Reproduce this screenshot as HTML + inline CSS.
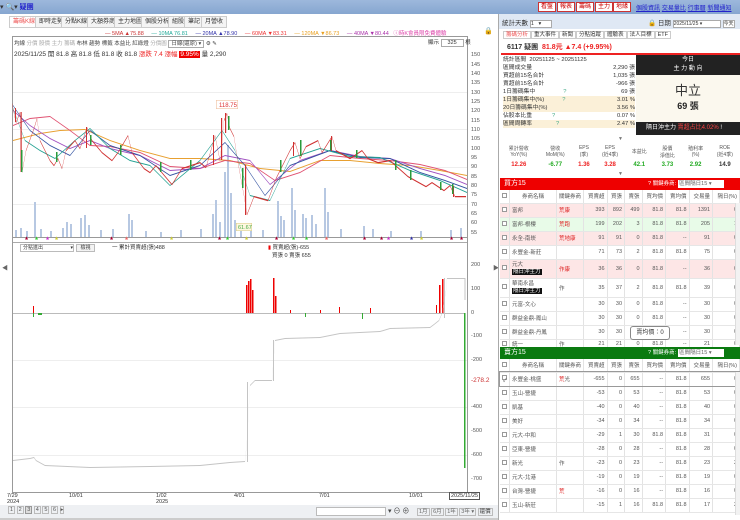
<!DOCTYPE html>
<html><head><meta charset="utf-8"><style>
*{margin:0;padding:0;box-sizing:border-box}
body{width:740px;height:520px;overflow:hidden;background:#fff;font-family:"Liberation Sans","Noto Sans CJK TC",sans-serif;font-size:6.5px;color:#333;position:relative}
.a{position:absolute;white-space:nowrap}
.tb{position:absolute;top:0;left:0;width:740px;height:14px;background:linear-gradient(#9db8dc,#86a6d0)}
.rb{position:absolute;top:2px;height:10px;border:1px solid #c33;background:#fff;color:#c00;font-size:6px;line-height:8px;padding:0 2px}
.lk{color:#22c;text-decoration:underline;font-size:6px}
.tab{position:absolute;top:16px;height:12px;border:1px solid #ccc;background:#f4f4f4;font-size:6px;line-height:10px;padding:0 3px;color:#333}
.ax{position:absolute;left:471px;font-size:5.5px;color:#555}
.tbl{position:absolute;left:500px;width:240px;border-collapse:collapse;font-size:5.5px}
.tbl td{border-right:1px solid #e3e3e3;border-bottom:1px solid #e6e6e6;text-align:right;padding:0 2px;color:#555}
.tbl td:nth-child(1){text-align:center;width:9px}
.tbl td:nth-child(2){text-align:left;width:47px}
.tbl td:nth-child(3){text-align:left;width:27px;color:#d22}
.cb{display:inline-block;width:5px;height:5px;border:1px solid #999;background:#fff}
.pink{background:#fde6e6}.mint{background:#e8fbe8}
.blk{background:#111;color:#fff;padding:0 1px}
.hl{position:absolute;height:1px;background:#eee}
</style></head><body>
<div class="tb"></div>
<div class="a" style="left:0;top:2px;font-size:7px">▾ 🔍▾ <span style="color:#22c;font-weight:bold">疑團</span></div>
<div class="rb" style="left:538px">看盤</div><div class="rb" style="left:557px">報表</div><div class="rb" style="left:576px">籌碼</div><div class="rb" style="left:595px">主力</div><div class="rb" style="left:613px">地緣</div>
<div class="a" style="left:636px;top:3px"><span class="lk">個股資訊</span> <span class="lk">交易量比</span> <span class="lk">行事曆</span> <span class="lk">新聞通知</span></div>

<div class="tab" style="left:9px;color:#e55;background:#fff">籌碼K線</div>
<div class="tab" style="left:35px">即時走勢</div>
<div class="tab" style="left:61px">分點K線</div>
<div class="tab" style="left:87px">大額券商</div>
<div class="tab" style="left:114px">主力地圖</div>
<div class="tab" style="left:141px">個股分析</div>
<div class="tab" style="left:168px">組股</div>
<div class="tab" style="left:184px">筆記</div>
<div class="tab" style="left:201px">月營收</div>
<div class="a" style="left:105px;top:29px;font-size:5.5px"><span style="color:#c33">— 5MA ▲75.88</span> &nbsp;&nbsp;&nbsp; <span style="color:#2a9">— 10MA 76.81</span> &nbsp;&nbsp;&nbsp; <span style="color:#33a">— 20MA ▲78.90</span> &nbsp;&nbsp;&nbsp; <span style="color:#e33">— 60MA ▼83.31</span> &nbsp;&nbsp;&nbsp; <span style="color:#e9a020">— 120MA ▼86.73</span> &nbsp;&nbsp;&nbsp; <span style="color:#a3a">— 40MA ▼80.44</span> &nbsp; <span style="color:#d4a">ⓘ時K會員限免費體驗</span></div>
<div class="a" style="left:484px;top:27px;font-size:7px">🔒</div>

<div class="a" style="left:12px;top:36px;width:456px;height:457px;border:1px solid #999"></div>
<div class="hl" style="left:13px;top:92px;width:454px"></div><div class="hl" style="left:13px;top:129px;width:454px"></div><div class="hl" style="left:13px;top:167px;width:454px"></div><div class="hl" style="left:13px;top:204px;width:454px"></div><div class="hl" style="left:13px;top:360px;width:454px"></div><div class="hl" style="left:13px;top:407px;width:454px"></div><div class="hl" style="left:13px;top:455px;width:454px"></div>
<div class="a" style="left:13px;top:237px;width:454px;height:1px;background:#999"></div>
<div class="a" style="left:13px;top:242px;width:454px;height:1px;background:#aaa"></div>
<div class="a" style="left:13px;top:313px;width:452px;height:1px;background:#bbb"></div>
<div class="a" style="left:14px;top:39px;font-size:5.5px;color:#444">均線 <span style="color:#aaa">分價 股價 主力 籌碼</span> 布林 趨勢 標籤 本益比 紅綠燈 <span style="color:#aaa">分價圖</span> <span style="border:1px solid #aaa;padding:0 2px">日線(還原) ▾</span> ⚙ ✎</div>
<div class="a" style="left:428px;top:38px;font-size:5.5px">顯示 <span style="border:1px solid #aaa;padding:0 6px">325</span> 根</div>
<div class="a" style="left:14px;top:48px;font-size:6.5px;color:#333">2025/11/25 開 81.8 高 81.8 低 81.8 收 81.8 <span style="color:#e22">漲跌 7.4 漲幅 </span><span style="background:#e00;color:#fff;padding:0 1px">9.95%</span> 量 2,290</div>

<svg class="a" style="left:0;top:0" width="500" height="520">
<g fill="#b7c8e2">
<rect x="15" y="230" width="2" height="7"/><rect x="20" y="228" width="2" height="9"/><rect x="26" y="231" width="2" height="6"/><rect x="34" y="202" width="2" height="35"/><rect x="40" y="229" width="2" height="8"/><rect x="50" y="231" width="2" height="6"/><rect x="62" y="228" width="2" height="9"/><rect x="66" y="222" width="2" height="15"/><rect x="70" y="224" width="2" height="13"/><rect x="80" y="218" width="2" height="19"/><rect x="84" y="215" width="2" height="22"/><rect x="88" y="225" width="2" height="12"/><rect x="100" y="230" width="2" height="7"/><rect x="112" y="229" width="2" height="8"/><rect x="128" y="214" width="2" height="23"/><rect x="131" y="220" width="2" height="17"/><rect x="145" y="231" width="2" height="6"/><rect x="160" y="232" width="2" height="5"/><rect x="180" y="230" width="2" height="7"/><rect x="200" y="229" width="2" height="8"/><rect x="212" y="214" width="2" height="23"/><rect x="215" y="200" width="2" height="37"/><rect x="219" y="222" width="2" height="15"/><rect x="224" y="172" width="2" height="65"/><rect x="227" y="145" width="2" height="92"/><rect x="230" y="193" width="2" height="44"/><rect x="234" y="220" width="2" height="17"/><rect x="240" y="226" width="2" height="11"/><rect x="250" y="229" width="2" height="8"/><rect x="262" y="230" width="2" height="7"/><rect x="277" y="201" width="2" height="36"/><rect x="280" y="216" width="2" height="21"/><rect x="283" y="220" width="2" height="17"/><rect x="291" y="188" width="2" height="49"/><rect x="294" y="210" width="2" height="27"/><rect x="302" y="214" width="2" height="23"/><rect x="305" y="218" width="2" height="19"/><rect x="311" y="215" width="2" height="22"/><rect x="315" y="224" width="2" height="13"/><rect x="324" y="188" width="2" height="49"/><rect x="327" y="212" width="2" height="25"/><rect x="340" y="229" width="2" height="8"/><rect x="363" y="226" width="2" height="11"/><rect x="372" y="229" width="2" height="8"/><rect x="390" y="231" width="2" height="6"/><rect x="420" y="231" width="2" height="6"/><rect x="450" y="230" width="2" height="7"/><rect x="460" y="228" width="2" height="9"/>
</g>
<path fill="#e8a030" d="M13,140 L40,133 L60,130 L85,129 L110,140 L140,150 L170,158 L200,158 L230,160 L260,168 L290,171 L320,160 L350,160 L380,163 L410,165 L440,170 L467,175 L467,176 L440,171 L410,166 L380,164 L350,161 L320,161 L290,172 L260,169 L230,161 L200,159 L170,159 L140,151 L110,141 L85,130 L60,131 L40,134 L13,141 Z"/>
<path fill="#e05070" d="M13,125 L30,118 L50,116 L70,130 L90,145 L110,146 L140,152 L170,166 L200,168 L225,160 L250,163 L275,180 L300,172 L330,155 L360,158 L390,160 L420,164 L445,170 L467,179 L467,180 L445,171 L420,165 L390,161 L360,159 L330,156 L300,173 L275,181 L250,164 L225,161 L200,169 L170,167 L140,153 L110,147 L90,146 L70,131 L50,117 L30,119 L13,126 Z"/>
<path fill="#a050c0" d="M13,110 L30,125 L50,138 L70,148 L90,140 L110,148 L140,155 L170,170 L200,168 L225,155 L250,160 L270,184 L300,160 L330,150 L360,156 L390,158 L420,168 L445,175 L467,184 L467,185 L445,176 L420,169 L390,159 L360,157 L330,151 L300,161 L270,185 L250,161 L225,156 L200,169 L170,171 L140,156 L110,149 L90,141 L70,149 L50,139 L30,126 L13,111 Z"/>
<path fill="#3050a0" d="M13,105 L30,130 L50,145 L70,155 L90,130 L110,145 L140,155 L170,175 L200,165 L225,142 L245,165 L265,195 L290,165 L330,150 L360,157 L390,158 L420,172 L445,180 L467,188 L467,189 L445,181 L420,173 L390,159 L360,158 L330,151 L290,166 L265,196 L245,166 L225,143 L200,166 L170,176 L140,156 L110,146 L90,131 L70,156 L50,146 L30,131 L13,106 Z"/>
<path fill="#20a090" d="M13,108 L25,140 L40,150 L55,158 L75,140 L90,128 L110,148 L130,160 L150,165 L170,185 L200,160 L222,130 L235,150 L250,195 L270,200 L290,158 L320,148 L350,156 L380,157 L410,170 L440,180 L467,192 L467,193 L440,181 L410,171 L380,158 L350,157 L320,149 L290,159 L270,201 L250,196 L235,151 L222,131 L200,161 L170,186 L150,166 L130,161 L110,149 L90,129 L75,141 L55,159 L40,151 L25,141 L13,109 Z"/>
<path fill="#d03030" d="M12,103 L16,122 L20,112 L22,172 L26,150 L34,128 L37,118 L40,140 L50,160 L54,165 L58,158 L62,168 L66,150 L75,140 L80,148 L87,127 L92,140 L102,152 L112,160 L118,152 L128,135 L132,152 L144,168 L150,172 L156,165 L172,184 L182,168 L200,162 L206,167 L212,146 L215,135 L220,160 L224,120 L227,113 L230,128 L234,136 L238,162 L244,195 L247,214 L254,196 L268,200 L276,178 L290,150 L295,142 L300,158 L306,146 L318,140 L322,152 L332,136 L336,150 L350,158 L362,150 L368,158 L378,162 L390,160 L408,176 L426,186 L432,182 L444,190 L450,185 L455,196 L466,196 L466,197.3 L455,197.3 L450,186.3 L444,191.3 L432,183.3 L426,187.3 L408,177.3 L390,161.3 L378,163.3 L368,159.3 L362,151.3 L350,159.3 L336,151.3 L332,137.3 L322,153.3 L318,141.3 L306,147.3 L300,159.3 L295,143.3 L290,151.3 L276,179.3 L268,201.3 L254,197.3 L247,215.3 L244,196.3 L238,163.3 L234,137.3 L230,129.3 L227,114.3 L224,121.3 L220,161.3 L215,136.3 L212,147.3 L206,168.3 L200,163.3 L182,169.3 L172,185.3 L156,166.3 L150,173.3 L144,169.3 L132,153.3 L128,136.3 L118,153.3 L112,161.3 L102,153.3 L92,141.3 L87,128.3 L80,149.3 L75,141.3 L66,151.3 L62,169.3 L58,159.3 L54,166.3 L50,161.3 L40,141.3 L37,119.3 L34,129.3 L26,151.3 L22,173.3 L20,113.3 L16,123.3 L12,104.3 Z"/>
<g fill="#d03030"><rect x="20.5" y="112" width="1.2" height="60"/><rect x="15" y="108" width="1" height="14"/><rect x="86" y="127" width="1" height="21"/><rect x="213" y="135" width="1" height="30"/><rect x="221" y="118" width="1.2" height="42"/><rect x="225" y="113" width="1.2" height="20"/><rect x="245" y="165" width="1.2" height="50"/><rect x="331" y="136" width="1" height="15"/><rect x="293" y="142" width="1" height="14"/><rect x="453" y="186" width="1" height="11"/></g>
<g fill="#2a9a3a"><rect x="21" y="150" width="1.5" height="22"/><rect x="56" y="152" width="1.5" height="10"/><rect x="120" y="145" width="1.5" height="10"/><rect x="160" y="162" width="1.5" height="10"/><rect x="228" y="116" width="1.5" height="14"/><rect x="242" y="168" width="1.5" height="20"/><rect x="280" y="160" width="1.5" height="12"/><rect x="300" y="140" width="1.5" height="16"/><rect x="356" y="150" width="1.5" height="8"/><rect x="410" y="170" width="1.5" height="10"/><rect x="452" y="184" width="1.5" height="10"/><rect x="90" y="135" width="1.5" height="10"/><rect x="190" y="160" width="1.5" height="10"/><rect x="330" y="140" width="1.5" height="10"/><rect x="395" y="160" width="1.5" height="10"/><rect x="440" y="182" width="1.5" height="8"/></g>
<rect x="216" y="100" width="22" height="9" fill="#f0c0a0"/><rect x="216.6" y="100.6" width="20.8" height="7.8" fill="#fff"/><text x="219" y="107" font-size="6" fill="#d33" font-family="Liberation Sans">118.75</text>
<rect x="236" y="223" width="16" height="8" fill="#dcd090"/><rect x="236.6" y="223.6" width="14.8" height="6.8" fill="#fff8e0"/><text x="238" y="229" font-size="5.5" fill="#4a4" font-family="Liberation Sans">61.67</text>
<g font-size="4" font-family="DejaVu Sans"><text x="25" y="239" fill="#a03">▲</text><text x="35" y="239" fill="#3c3">▲</text><text x="46" y="239" fill="#c3c">▲</text><text x="55" y="239" fill="#cc3">▲</text><text x="110" y="239" fill="#a03">▲</text><text x="125" y="239" fill="#e66">▲</text><text x="170" y="239" fill="#cc3">▲</text><text x="218" y="239" fill="#a03">▲</text><text x="226" y="239" fill="#3c3">▲</text><text x="245" y="239" fill="#cc3">▲</text><text x="275" y="239" fill="#a03">▲</text><text x="292" y="239" fill="#3c3">▲</text><text x="305" y="239" fill="#3c3">▲</text><text x="325" y="239" fill="#e66">▲</text><text x="363" y="239" fill="#a03">▲</text><text x="380" y="239" fill="#a03">▲</text><text x="387" y="239" fill="#c3c">▲</text><text x="410" y="239" fill="#33a">▲</text><text x="420" y="239" fill="#cc3">▲</text><text x="450" y="239" fill="#a03">▲</text><text x="460" y="239" fill="#a03">▲</text></g>
<g fill="#e00"><rect x="246" y="285" width="1.5" height="28"/><rect x="248" y="281" width="1.5" height="32"/><rect x="250" y="279" width="1.5" height="34"/><rect x="252" y="290" width="1.5" height="23"/><rect x="273" y="278" width="1.5" height="35"/><rect x="275" y="296" width="1.5" height="17"/><rect x="33" y="306" width="1" height="7"/><rect x="339" y="307" width="1" height="6"/><rect x="370" y="308" width="1" height="5"/><rect x="436" y="305" width="1" height="8"/><rect x="439" y="285" width="1.5" height="28"/><rect x="442" y="279" width="1.5" height="34"/><rect x="290" y="310" width="1" height="3"/><rect x="320" y="310" width="1" height="3"/></g>
<g fill="#3a3"><rect x="33" y="313" width="1" height="4"/><rect x="38" y="313" width="4" height="2"/><rect x="305" y="313" width="1" height="4"/><rect x="362" y="313" width="1" height="6"/><rect x="464" y="313" width="1.5" height="155"/></g>
<path fill="#c4c4c4" d="M13,460 L30,458 L34,457 L36,460 L45,465 L90,467 L150,466 L200,465 L230,462 L245,461 L247,440 L250,385 L255,380 L272,380 L275,340 L285,338 L320,337 L340,333 L380,331 L390,328 L430,327 L434,324 L439,320 L442,313 L446,290 L447,278 L465,278 L465,279 L447,279 L446,291 L442,314 L439,321 L434,325 L430,328 L390,329 L380,332 L340,334 L320,338 L285,339 L275,341 L272,381 L255,381 L250,386 L247,441 L245,462 L230,463 L200,466 L150,467 L90,468 L45,466 L36,461 L34,458 L30,459 L13,461 Z"/>
<g fill="#c4c4c4"><rect x="247" y="382" width="1" height="80"/><rect x="273" y="340" width="1" height="41"/><rect x="444" y="278" width="1" height="40"/><rect x="464.5" y="278" width="1" height="22"/></g>
</svg>

<div class="ax" style="top:52px">150</div><div class="ax" style="top:62px">145</div><div class="ax" style="top:71px">140</div><div class="ax" style="top:80px">135</div><div class="ax" style="top:90px">130</div><div class="ax" style="top:99px">125</div><div class="ax" style="top:108px">120</div><div class="ax" style="top:118px">115</div><div class="ax" style="top:127px">110</div><div class="ax" style="top:136px">105</div><div class="ax" style="top:146px">100</div><div class="ax" style="top:155px">95</div><div class="ax" style="top:164px">90</div><div class="ax" style="top:174px">85</div><div class="ax" style="top:183px">80</div><div class="ax" style="top:192px">75</div><div class="ax" style="top:202px">70</div><div class="ax" style="top:211px">65</div><div class="ax" style="top:220px">60</div><div class="ax" style="top:230px">55</div>
<div class="ax" style="top:262px">200</div><div class="ax" style="top:286px">100</div><div class="ax" style="top:310px">0</div><div class="ax" style="top:333px">-100</div><div class="ax" style="top:357px">-200</div><div class="ax" style="top:377px;color:#c33;font-size:6.5px">-278.2</div><div class="ax" style="top:404px">-400</div><div class="ax" style="top:428px">-500</div><div class="ax" style="top:452px">-600</div><div class="ax" style="top:476px">-700</div>

<div class="a" style="left:20px;top:244px;width:54px;height:8px;border:1px solid #bbb;font-size:5px;line-height:6px;padding-left:2px">分點進出 <span style="float:right">▾</span></div>
<div class="a" style="left:76px;top:244px;width:19px;height:8px;border:1px solid #bbb;background:#f3f3f3;font-size:5px;line-height:6px;text-align:center">檢視</div>
<div class="a" style="left:112px;top:243px;font-size:5.5px">一 累計買賣超(張)488</div>
<div class="a" style="left:268px;top:243px;font-size:5.5px"><span style="color:#e00">▮</span> 買賣超(張)-655</div>
<div class="a" style="left:272px;top:251px;font-size:5.5px">買張 0 賣張 655</div>
<div class="a" style="left:2px;top:263px;font-size:6px;color:#666">◀</div>
<div class="a" style="left:493px;top:263px;font-size:6px;color:#666">▶</div>

<div class="a" style="left:7px;top:493px;font-size:5.5px;line-height:6px">7/29<br>2024</div>
<div class="a" style="left:69px;top:493px;font-size:5.5px">10/01</div>
<div class="a" style="left:156px;top:493px;font-size:5.5px;line-height:6px">1/02<br>2025</div>
<div class="a" style="left:234px;top:493px;font-size:5.5px">4/01</div>
<div class="a" style="left:319px;top:493px;font-size:5.5px">7/01</div>
<div class="a" style="left:409px;top:493px;font-size:5.5px">10/01</div>
<div class="a" style="left:449px;top:492px;font-size:5.5px;border:1px solid #555;padding:0 1px">2025/11/25</div>

<div class="a" style="left:0;top:505px;width:498px;height:13px;background:#eef0f3"></div>
<div class="a" style="left:8px;top:507px;font-size:5.5px;color:#555"><span style="border:1px solid #bbb;padding:0 1px">1</span> <span style="border:1px solid #bbb;padding:0 1px">2</span> <span style="border:1px solid #999;background:#ddd;padding:0 1px">3</span> <span style="border:1px solid #bbb;padding:0 1px">4</span> <span style="border:1px solid #bbb;padding:0 1px">5</span> <span style="border:1px solid #bbb;padding:0 1px">6</span> <span style="border:1px solid #bbb">▸</span></div>
<div class="a" style="left:316px;top:507px;width:70px;height:9px;border:1px solid #bbb;background:#fff"></div>
<div class="a" style="left:388px;top:506px;font-size:7px;color:#444">▾ ⊖ ⊕</div>
<div class="a" style="left:417px;top:507px;font-size:5.5px;color:#666"><span style="border:1px solid #bbb;padding:0 1px">1月</span> <span style="border:1px solid #bbb;padding:0 1px">6月</span> <span style="border:1px solid #bbb;padding:0 1px">1年</span> <span style="border:1px solid #bbb;padding:0 1px">3年 ▾</span> <span style="border:1px solid #bbb;padding:0 1px;color:#333">還價</span></div>
<div class="a" style="left:0;top:518px;width:740px;height:2px;background:#ccc"></div>

<div class="a" style="left:498px;top:14px;width:242px;height:506px;background:#fff;border-left:1px solid #aaa"></div>
<div class="a" style="left:499px;top:14px;width:241px;height:15px;background:#dfe8f4"></div>
<div class="a" style="left:502px;top:17px;font-size:6.5px">統計天數 <span style="display:inline-block;width:22px;border:1px solid #aaa;background:#fff;font-size:5.5px">1 &nbsp;&nbsp;▾</span></div>
<div class="a" style="left:648px;top:17px;font-size:6.5px">🔒 日期 <span style="display:inline-block;width:48px;border:1px solid #aaa;background:#fff;font-size:5px">2025/11/25 ▾</span> <span style="border:1px solid #aaa;font-size:5px;background:#fff">今天</span></div>
<div class="a" style="left:503px;top:30px;font-size:5.5px"><span style="border:1px solid #ccc;padding:0 2px;color:#e55">籌碼分析</span><span style="border:1px solid #ccc;padding:0 2px">重大事件</span><span style="border:1px solid #ccc;padding:0 2px">新聞</span><span style="border:1px solid #ccc;padding:0 2px">分點追蹤</span><span style="border:1px solid #ccc;padding:0 2px">體驗表</span><span style="border:1px solid #ccc;padding:0 2px">法人目標</span><span style="border:1px solid #ccc;padding:0 2px">ETF</span></div>
<div class="a" style="left:507px;top:42px;font-size:7px;font-weight:bold">6117 疑團 &nbsp;<span style="color:#e22">81.8元 ▲7.4 (+9.95%)</span></div>
<div class="a" style="left:501px;top:53px;width:239px;height:2px;background:#e22"></div>
<div class="a" style="left:503px;top:56px;width:132px;font-size:5.8px;line-height:8px">
<div>統計區間 &nbsp;20251125 ~ 20251125</div>
<div>區間成交量<span style="float:right">2,290 張</span></div>
<div>買超前15名合計<span style="float:right">1,035 張</span></div>
<div>賣超前15名合計<span style="float:right">-966 張</span></div>
<div>1日籌碼集中<span style="color:#4a8;margin-left:28px">?</span><span style="float:right">69 張</span></div>
<div style="background:#fbf0d8">1日籌碼集中(%)<span style="color:#4a8;margin-left:18px">?</span><span style="float:right">3.01 %</span></div>
<div style="background:#fbf0d8">20日籌碼集中(%)<span style="float:right">3.56 %</span></div>
<div>佔股本比重<span style="color:#4a8;margin-left:20px">?</span><span style="float:right">0.07 %</span></div>
<div style="background:#fbf0d8">區間周轉率<span style="color:#4a8;margin-left:24px">?</span><span style="float:right">2.47 %</span></div>
</div>
<div class="a" style="left:636px;top:55px;width:104px;height:20px;background:#222;color:#fff;font-size:6px;text-align:center;line-height:9px;padding-top:1px">今日<br>主 力 動 向</div>
<div class="a" style="left:636px;top:75px;width:104px;height:47px;background:#fbf8ee;text-align:center"><div style="font-size:13px;margin-top:5px;color:#333">中立</div><div style="font-size:9px;font-weight:bold;color:#222">69 張</div></div>
<div class="a" style="left:636px;top:122px;width:104px;height:13px;background:#222;color:#fff;font-size:6px;line-height:13px;padding-left:10px">隔日沖主力 <span style="color:#f44">賣超占比4.02%</span> !</div>
<div class="a" style="left:618px;top:136px;font-size:5px;color:#777">▼</div>
<table class="a" style="left:500px;top:143px;width:240px;border-collapse:collapse;font-size:5px;text-align:center">
<tr style="height:17px;color:#555"><td>累計營收<br>YoY(%)</td><td>營收<br>MoM(%)</td><td>EPS<br>(季)</td><td>EPS<br>(近4季)</td><td>本益比</td><td>股價<br>淨值比</td><td>殖利率<br>(%)</td><td>ROE<br>(近4季)</td></tr>
<tr style="height:10px;font-size:6px;font-weight:bold"><td style="color:#e22">12.26</td><td style="color:#2a2">-6.77</td><td style="color:#e22">1.36</td><td style="color:#e22">3.28</td><td style="color:#2a2">42.1</td><td style="color:#2a2">3.73</td><td style="color:#2a2">2.92</td><td>14.9</td></tr>
</table>
<div class="a" style="left:618px;top:171px;font-size:5px;color:#777">▼</div>

<div class="a" style="left:500px;top:178px;width:240px;height:12px;background:#e00;color:#fff;font-size:7px;line-height:12px;padding-left:4px">買方15<span style="position:absolute;left:148px;font-size:5.5px">? 關鍵券商: <span style="display:inline-block;width:46px;height:8px;background:#fff;color:#666;line-height:8px;vertical-align:middle">&nbsp;區間隔日15 ▾</span></span></div>
<table class="tbl" style="top:190px">
<tr style="height:13px"><td><span class="cb"></span></td><td style="text-align:center">券商名稱</td><td style="color:#555;text-align:center">關鍵券商</td><td>買賣超</td><td>買張</td><td>賣張</td><td>買均價</td><td>賣均價</td><td>交易量</td><td>隔日(%)</td></tr>
<tr class="pink" style="height:14px"><td><span class="cb"></span></td><td>富邦</td><td>荒康</td><td>393</td><td>892</td><td>499</td><td>81.8</td><td>81.8</td><td>1391</td><td>0</td></tr>
<tr class="mint" style="height:14px"><td><span class="cb"></span></td><td>富邦-根樓</td><td>荒跑</td><td>199</td><td>202</td><td>3</td><td>81.8</td><td>81.8</td><td>205</td><td>1</td></tr>
<tr class="pink" style="height:14px"><td><span class="cb"></span></td><td>永全-南崁</td><td>荒地康</td><td>91</td><td>91</td><td>0</td><td>81.8</td><td>--</td><td>91</td><td>0</td></tr>
<tr style="height:14px"><td><span class="cb"></span></td><td>永豐金-新莊</td><td></td><td>71</td><td>73</td><td>2</td><td>81.8</td><td>81.8</td><td>75</td><td>0</td></tr>
<tr class="pink" style="height:19px"><td><span class="cb"></span></td><td style="line-height:7px">元大<br><span class="blk">隔日沖主力</span></td><td>作康</td><td>36</td><td>36</td><td>0</td><td>81.8</td><td>--</td><td>36</td><td>0</td></tr>
<tr style="height:19px"><td><span class="cb"></span></td><td style="line-height:7px">華南永昌<br><span class="blk">隔日沖主力</span></td><td style="color:#555">作</td><td>35</td><td>37</td><td>2</td><td>81.8</td><td>81.8</td><td>39</td><td>0</td></tr>
<tr style="height:14px"><td><span class="cb"></span></td><td>元富-文心</td><td></td><td>30</td><td>30</td><td>0</td><td>81.8</td><td>--</td><td>30</td><td>0</td></tr>
<tr style="height:14px"><td><span class="cb"></span></td><td>群益金鼎-鳳山</td><td></td><td>30</td><td>30</td><td>0</td><td>81.8</td><td>--</td><td>30</td><td>0</td></tr>
<tr style="height:14px"><td><span class="cb"></span></td><td>群益金鼎-丹鳳</td><td></td><td>30</td><td>30</td><td>0</td><td>81.8</td><td>--</td><td>30</td><td>0</td></tr>
<tr style="height:10px"><td><span class="cb"></span></td><td>統一</td><td style="color:#555">作</td><td>21</td><td>21</td><td>0</td><td>81.8</td><td>--</td><td>21</td><td>0</td></tr>
</table>
<div class="a" style="left:630px;top:326px;width:40px;height:14px;background:#fff;border:1px solid #888;border-radius:3px;font-size:6px;line-height:12px;text-align:center">賣均價：0</div>

<div class="a" style="left:500px;top:347px;width:240px;height:12px;background:#0a7a10;color:#fff;font-size:7px;line-height:12px;padding-left:4px">賣方15<span style="position:absolute;left:148px;font-size:5.5px">? 關鍵券商: <span style="display:inline-block;width:46px;height:8px;background:#fff;color:#666;line-height:8px;vertical-align:middle">&nbsp;區間隔日15 ▾</span></span></div>
<table class="tbl" style="top:359px">
<tr style="height:13px"><td><span class="cb"></span></td><td style="text-align:center">券商名稱</td><td style="color:#555;text-align:center">關鍵券商</td><td>買賣超</td><td>買張</td><td>賣張</td><td>買均價</td><td>賣均價</td><td>交易量</td><td>隔日(%)</td></tr>
<tr style="height:14px;outline:1px solid #999"><td><span class="cb">✓</span></td><td>永豐金-桃盛</td><td>荒<span style="color:#555">光</span></td><td>-655</td><td>0</td><td>655</td><td>--</td><td>81.8</td><td>655</td><td>0</td></tr>
<tr style="height:14px"><td><span class="cb"></span></td><td>玉山-營捷</td><td></td><td>-53</td><td>0</td><td>53</td><td>--</td><td>81.8</td><td>53</td><td>0</td></tr>
<tr style="height:14px"><td><span class="cb"></span></td><td>凱基</td><td></td><td>-40</td><td>0</td><td>40</td><td>--</td><td>81.8</td><td>40</td><td>0</td></tr>
<tr style="height:14px"><td><span class="cb"></span></td><td>美好</td><td></td><td>-34</td><td>0</td><td>34</td><td>--</td><td>81.8</td><td>34</td><td>0</td></tr>
<tr style="height:14px"><td><span class="cb"></span></td><td>元大-中和</td><td></td><td>-29</td><td>1</td><td>30</td><td>81.8</td><td>81.8</td><td>31</td><td>0</td></tr>
<tr style="height:14px"><td><span class="cb"></span></td><td>亞東-營捷</td><td></td><td>-28</td><td>0</td><td>28</td><td>--</td><td>81.8</td><td>28</td><td>0</td></tr>
<tr style="height:14px"><td><span class="cb"></span></td><td>新光</td><td style="color:#555">作</td><td>-23</td><td>0</td><td>23</td><td>--</td><td>81.8</td><td>23</td><td>2</td></tr>
<tr style="height:14px"><td><span class="cb"></span></td><td>元大-北港</td><td></td><td>-19</td><td>0</td><td>19</td><td>--</td><td>81.8</td><td>19</td><td>0</td></tr>
<tr style="height:14px"><td><span class="cb"></span></td><td>台灣-營捷</td><td>荒</td><td>-16</td><td>0</td><td>16</td><td>--</td><td>81.8</td><td>16</td><td>0</td></tr>
<tr style="height:14px"><td><span class="cb"></span></td><td>玉山-新莊</td><td></td><td>-15</td><td>1</td><td>16</td><td>81.8</td><td>81.8</td><td>17</td><td>2</td></tr>
</table>
<div class="a" style="left:735px;top:372px;width:5px;height:143px;background:#f2f2f2;border-left:1px solid #ddd"></div>
<div class="a" style="left:735px;top:203px;width:5px;height:142px;background:#f2f2f2;border-left:1px solid #ddd"></div>
</body></html>
